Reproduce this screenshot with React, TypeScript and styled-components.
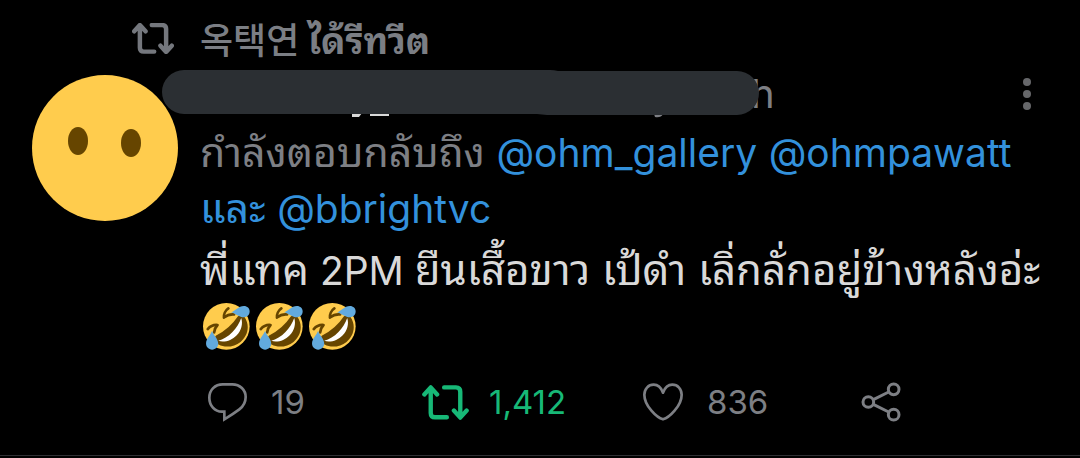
import React from "react";
import styled, { createGlobalStyle } from "styled-components";

const GREY = "#7d7f84";
const BLUE = "#3391dc";
const GREEN = "#17b877";

const GlobalStyle = createGlobalStyle`
  body {
    margin: 0;
    background: #000;
    color: #d9d9d9;
    font-family: Inter, "Noto Sans Thai Looped", "Noto Sans CJK KR", sans-serif;
  }
`;

const Tweet = styled.article`
  display: grid;
  grid-template-columns: 148px 1fr;
  column-gap: 21px;
  padding: 10px 24px 0 31px;
  border-bottom: 1px solid #2f2f33;
`;

const ContextIcon = styled.div`
  display: flex;
  align-items: center;
  justify-content: flex-end;
  padding-right: 5px;
  color: #74777d;
`;

const Context = styled.p`
  margin: 0;
  height: 56px;
  line-height: 56px;
  font-size: 36px;
  font-weight: 700;
  color: #7b7e84;
`;

const Korean = styled.span`
  font-family: "Noto Sans CJK KR", sans-serif;
  font-weight: 500;
`;

const AvatarLink = styled.a`
  display: block;
  height: 148px;
  margin-top: 8px;
`;

const Content = styled.div`
  min-width: 0;
`;

const Header = styled.header`
  display: flex;
  align-items: center;
  height: 56px;
  margin: 0 0 2px -38px;
`;

const Redaction = styled.svg`
  position: relative;
  flex: none;
`;

const Time = styled.time`
  flex: 1;
  margin-left: -9px;
  font-size: 40px;
  line-height: 56px;
  color: ${GREY};
`;

const MenuButton = styled.button`
  display: flex;
  justify-content: center;
  width: 40px;
  margin-right: 9px;
  padding: 0;
  border: 0;
  background: none;
  color: #66676a;
`;

const Replying = styled.p`
  margin: 0;
  font-size: 41px;
  line-height: 56px;
  color: ${GREY};
`;

const Mention = styled.a`
  color: ${BLUE};
  text-decoration: none;
`;

const Latin = styled.span`
  font-size: 39px;
  line-height: 1;
`;

const Message = styled.p`
  margin: 6px 0 0;
  font-size: 42px;
  line-height: 56px;
`;

const EmojiRow = styled.span`
  display: flex;
  align-items: center;
  gap: 6px;
  height: 56px;
  padding-left: 3px;
`;

const Actions = styled.div`
  display: grid;
  grid-template-columns: repeat(3, 1fr) 48px;
  margin: 20px 151px 25px 3px;
`;

const Action = styled.button<{ $active?: boolean }>`
  display: flex;
  align-items: center;
  gap: 20px;
  height: 56px;
  padding: 0;
  border: 0;
  background: none;
  font: inherit;
  font-size: 33px;
  color: ${(p) => (p.$active ? GREEN : GREY)};
`;

const IconBox = styled.span`
  display: flex;
  justify-content: center;
  width: 48px;
`;

function RetweetIcon({ width, height, stroke }: { width: number; height: number; stroke: number }) {
  return (
    <svg width={width} height={height} viewBox="0 0 140 104" fill="none" stroke="currentColor" strokeWidth={stroke} strokeLinecap="round" strokeLinejoin="round" aria-hidden="true">
      <path d="M7 28 26 7l19 21M26 9v74q0 13 13 13h35" />
      <path d="M66 7h35q13 0 13 13v74M95 76l19 21 19-21" />
    </svg>
  );
}

function ReplyIcon() {
  return (
    <svg width="39" height="39" viewBox="0 0 117 117" fill="none" stroke="currentColor" strokeWidth="8" aria-hidden="true">
      <path d="M44 4h29c23 0 40 17 40 38 0 16-7 28-19 37-12 9-27 19-45 30V86h-7C20 85 4 68 4 44 4 21 21 4 44 4Z" />
    </svg>
  );
}

function HeartIcon() {
  return (
    <svg width="40" height="38" viewBox="0 0 120 114" fill="none" stroke="currentColor" strokeWidth="8" strokeLinejoin="round" aria-hidden="true">
      <path d="M60 29C54 13 44 5 32 5 16 5 4 18 4 35c0 34 38 69 56 74 18-5 56-40 56-74 0-17-12-30-28-30-12 0-22 8-28 24Z" />
    </svg>
  );
}

function ShareIcon() {
  return (
    <svg width="40" height="40" viewBox="0 0 120 120" fill="none" stroke="currentColor" strokeWidth="9" aria-hidden="true">
      <circle cx="22" cy="60" r="16" />
      <circle cx="98" cy="22" r="16" />
      <circle cx="98" cy="98" r="16" />
      <path d="M37 53 83 30M37 67l46 23" />
    </svg>
  );
}

function Rofl() {
  return (
    <svg width="47" height="47" viewBox="0 0 139 139" role="img" aria-label="rolling on the floor laughing">
      <circle cx="69" cy="69" r="69" fill="#ffcc4d" />
      <path d="M42 96C69 87 92 66 105 40c5-5 13-4 17 1 20 28 8 59-11 74-18 14-44 19-65 8-10-6-14-23-4-27Z" fill="#664500" />
      <path d="M45 112c30-9 58-37 68-68 6 16 0 39-14 52-14 14-35 22-54 16Z" fill="#fff" />
      <path d="M41 100C68 86 92 64 106 43" fill="none" stroke="#664500" strokeWidth="9" strokeLinecap="round" />
      <path d="M75 16C66 22 61 34 62 43c9-7 19-10 30-9M14 77c8-9 19-13 29-12-6 6-9 14-10 22" fill="none" stroke="#664500" strokeWidth="8" strokeLinecap="round" strokeLinejoin="round" />
      <path d="M83 27c12-2 22-18 38-18 10 0 17 7 17 16s-7 17-17 17c-13 0-25-11-38-15ZM27 82c2 12 18 23 18 38 0 10-8 18-18 18s-18-8-18-18c0-14 13-25 18-38Z" fill="#62aade" />
    </svg>
  );
}

export default function App() {
  return (
    <>
      <GlobalStyle />
      <Tweet>
        <ContextIcon>
          <RetweetIcon width={42} height={31} stroke={15} />
        </ContextIcon>
        <Context>
          <Korean lang="ko">옥택연</Korean> <span lang="th">ได้รีทวีต</span>
        </Context>
        <AvatarLink href="#profile" aria-label="Profile">
          <svg width="148" height="148" viewBox="0 0 148 148" aria-hidden="true">
            <circle cx="74" cy="74" r="73" fill="#ffcc4d" />
            <ellipse cx="47" cy="67" rx="10" ry="14" fill="#664500" />
            <ellipse cx="100" cy="69" rx="10" ry="14" fill="#664500" />
          </svg>
        </AvatarLink>
        <Content>
          <Header>
            <Redaction width="598" height="50" viewBox="0 0 598 50" aria-hidden="true">
              <path d="M190 44h10l-3 4h-7ZM208 44h19v3h-19Z" fill="#d9d9d9" />
              <path d="M492 45h9q-2 4-8 3ZM346 44h10l-5 1Z" fill={GREY} />
              <path d="M22 1h366q4 0 8 1h179a22 22 0 0 1 0 44H385l-10-1H22A22 22 0 0 1 22 1Z" fill="#2b2f33" />
            </Redaction>
            <Time>h</Time>
            <MenuButton type="button" aria-label="More">
              <svg width="8" height="32" viewBox="0 0 8 32" fill="currentColor" aria-hidden="true">
                <circle cx="4" cy="4" r="4" />
                <circle cx="4" cy="16" r="4" />
                <circle cx="4" cy="28" r="4" />
              </svg>
            </MenuButton>
          </Header>
          <Replying lang="th">
            กำลังตอบกลับถึง{" "}
            <Mention href="#ohm_gallery"><Latin>@ohm_gallery</Latin></Mention>{" "}
            <Mention href="#ohmpawatt"><Latin>@ohmpawatt</Latin></Mention>{" "}
            <Mention href="#bbrightvc">และ <Latin>@bbrightvc</Latin></Mention>
          </Replying>
          <Message lang="th">
            พี่แทค<Latin> 2PM </Latin>ยืนเสื้อขาว เป้ดำ เลิ่กลั่กอยู่ข้างหลังอ่ะ
            <EmojiRow>
              <Rofl />
              <Rofl />
              <Rofl />
            </EmojiRow>
          </Message>
          <Actions>
            <Action type="button" aria-label="Reply">
              <IconBox><ReplyIcon /></IconBox>
              19
            </Action>
            <Action type="button" aria-label="Retweet" $active>
              <IconBox><RetweetIcon width={47} height={35} stroke={13} /></IconBox>
              1,412
            </Action>
            <Action type="button" aria-label="Like">
              <IconBox><HeartIcon /></IconBox>
              836
            </Action>
            <Action type="button" aria-label="Share">
              <IconBox><ShareIcon /></IconBox>
            </Action>
          </Actions>
        </Content>
      </Tweet>
    </>
  );
}
